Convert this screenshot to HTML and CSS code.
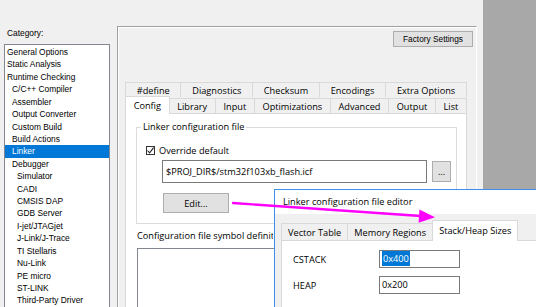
FILE: index.html
```html
<!DOCTYPE html>
<html lang="en">
<head>
    <meta charset="UTF-8">
    <title>Options for node</title>
    <link rel="stylesheet" href="styles.css">
</head>
<body>
    <div class="window">
        <aside class="category">
            <div class="category-label">Category:</div>
            <ul class="category-list">
                <li>General Options</li>
                <li>Static Analysis</li>
                <li>Runtime Checking</li>
                <li class="lvl1">C/C++ Compiler</li>
                <li class="lvl1">Assembler</li>
                <li class="lvl1">Output Converter</li>
                <li class="lvl1">Custom Build</li>
                <li class="lvl1">Build Actions</li>
                <li class="lvl1 selected">Linker</li>
                <li class="lvl1">Debugger</li>
                <li class="lvl2">Simulator</li>
                <li class="lvl2">CADI</li>
                <li class="lvl2">CMSIS DAP</li>
                <li class="lvl2">GDB Server</li>
                <li class="lvl2">I-jet/JTAGjet</li>
                <li class="lvl2">J-Link/J-Trace</li>
                <li class="lvl2">TI Stellaris</li>
                <li class="lvl2">Nu-Link</li>
                <li class="lvl2">PE micro</li>
                <li class="lvl2">ST-LINK</li>
                <li class="lvl2">Third-Party Driver</li>
            </ul>
        </aside>

        <main class="options">
            <div class="options-top">
                <button class="btn factory">Factory Settings</button>
            </div>
            <div class="tabs">
                <div class="tab-row back">
                    <span class="tab">#define</span>
                    <span class="tab">Diagnostics</span>
                    <span class="tab">Checksum</span>
                    <span class="tab">Encodings</span>
                    <span class="tab">Extra Options</span>
                </div>
                <div class="tab-row front">
                    <span class="tab active">Config</span>
                    <span class="tab">Library</span>
                    <span class="tab">Input</span>
                    <span class="tab">Optimizations</span>
                    <span class="tab">Advanced</span>
                    <span class="tab">Output</span>
                    <span class="tab">List</span>
                </div>
            </div>
            <div class="tab-page">
                <fieldset class="group">
                    <legend>Linker configuration file</legend>
                    <label class="check-row">
                        <span class="checkbox">
                            <svg width="9" height="9" viewBox="0 0 9 9"><path d="M1.5 4.5 L3.6 6.8 L7.6 1.6" fill="none" stroke="#222" stroke-width="1.1"/></svg>
                        </span>
                        Override default
                    </label>
                    <div class="path-row">
                        <div class="textbox path">$PROJ_DIR$/stm32f103xb_flash.icf</div>
                        <button class="btn browse">...</button>
                    </div>
                    <button class="btn edit">Edit...</button>
                </fieldset>
                <div class="symbols-label">Configuration file symbol definitions: (one per line)</div>
                <div class="textbox symbols"></div>
            </div>
        </main>

        <div class="backdrop"></div>
    </div>

    <section class="editor">
        <div class="editor-title">Linker configuration file editor</div>
        <div class="editor-tabs">
            <span class="etab">Vector Table</span>
            <span class="etab">Memory Regions</span>
            <span class="etab active">Stack/Heap Sizes</span>
        </div>
        <div class="editor-panel">
            <div class="size-row">
                <span class="size-name">CSTACK</span>
                <div class="textbox size"><span class="sel">0x400</span></div>
            </div>
            <div class="size-row">
                <span class="size-name">HEAP</span>
                <div class="textbox size">0x200</div>
            </div>
        </div>
    </section>

    <svg class="arrow" width="536" height="307" viewBox="0 0 536 307">
        <line x1="233" y1="203" x2="421" y2="216" stroke="#ff00ff" stroke-width="2.4" stroke-linecap="round"/>
        <polygon points="435,217.2 418.6,222.8 419.4,209.6" fill="#ff00ff"/>
    </svg>
</body>
</html>
```

FILE: styles.css
```css
body {
    margin: 0;
    width: 536px;
    height: 307px;
    overflow: hidden;
    position: relative;
    background: #f0f0f0;
    color: #000;
    font-family: "Open Sans", "Noto Sans CJK SC", sans-serif;
    font-size: 9.2px;
}
.window {
    display: flex;
    height: 307px;
}

/* category tree */
.category {
    flex: none;
    display: flex;
    flex-direction: column;
    width: 110px;
    padding-left: 4px;
    box-sizing: border-box;
    font-family: "Liberation Sans", Arial, sans-serif;
    font-size: 8.4px;
}
.category-label {
    height: 44px;
    padding: 28px 0 0 3px;
    box-sizing: border-box;
    line-height: 10px;
}
.category-list {
    flex: 1;
    margin: 0;
    padding: 1px 0 0;
    list-style: none;
    overflow: hidden;
    background: #fff;
    border: 1px solid #828790;
    border-bottom: none;
}
.category-list li {
    height: 12.43px;
    line-height: 12.43px;
    padding-left: 2px;
    white-space: nowrap;
}
.category-list .lvl1 {
    padding-left: 7px;
}
.category-list .lvl2 {
    padding-left: 12px;
}
.category-list .selected {
    background: #0078d7;
    color: #fff;
}

/* options frame */
.options {
    flex: none;
    display: flex;
    flex-direction: column;
    width: 358px;
    margin: 26px 0 0 7px;
    border: 1px solid;
    border-color: #a0a0a0 #fff #fff #a0a0a0;
    border-bottom: none;
    box-shadow: inset 1px 1px 0 #fff;
}
.options-top {
    display: flex;
    justify-content: flex-end;
    padding: 4px 3px 0 0;
}
.btn {
    font: inherit;
    color: #000;
    background: #e1e1e1;
    border: 1px solid #adadad;
    padding: 0;
    margin: 0;
}
.factory {
    width: 80px;
    height: 16px;
    font-family: "Liberation Sans", Arial, sans-serif;
    font-size: 8.3px;
}
.tabs {
    margin: 35px 0 0 7px;
    width: 342px;
}
.tab-row {
    display: flex;
    align-items: flex-end;
}
.tab-row.back {
    height: 15px;
}
.tab-row.front {
    height: 16px;
}
.tab {
    flex: 1 1 auto;
    text-align: center;
    height: 15px;
    line-height: 15px;
    padding: 0 5px;
    border: 1px solid #d9d9d9;
    border-bottom: none;
    margin-left: -1px;
    box-sizing: border-box;
    background: #f0f0f0;
    white-space: nowrap;
}
.tab:first-child {
    margin-left: 0;
}
.tab-row.front .tab.active {
    height: 18px;
    line-height: 17px;
    margin-bottom: -1px;
    background: #fff;
    position: relative;
}
.tab-page {
    flex: 1;
    min-height: 0;
    overflow: hidden;
    margin-left: 7px;
    width: 342px;
    box-sizing: border-box;
    background: #fff;
    border: 1px solid #d9d9d9;
    border-bottom: none;
}
.group {
    margin: 7px 9px 0 10px;
    padding: 0 0 10px 9px;
    border: 1px solid #dcdcdc;
    height: 103px;
    box-sizing: border-box;
}
.group legend {
    padding: 0 2px;
    margin-left: -5px;
    line-height: 12px;
}
.check-row {
    display: flex;
    align-items: center;
    gap: 4px;
    margin-top: 13px;
    height: 9px;
}
.checkbox {
    width: 9px;
    height: 9px;
    box-sizing: border-box;
    border: 1px solid #333;
    background: #fff;
    display: flex;
}
.checkbox svg {
    margin: -1px;
}
.path-row {
    display: flex;
    align-items: center;
    gap: 5px;
    margin: 5px 0 0 16px;
}
.textbox {
    background: #fff;
    border: 1px solid #7a7a7a;
    box-sizing: border-box;
    white-space: nowrap;
}
.path {
    width: 265px;
    height: 23px;
    line-height: 21px;
    padding-left: 3px;
}
.browse {
    width: 19px;
    height: 21px;
}
.edit {
    display: block;
    width: 66px;
    height: 20px;
    margin: 10px 0 0 17px;
}
.symbols-label {
    width: 136px;
    overflow: hidden;
    margin: 6px 0 0 11px;
    line-height: 12px;
    white-space: nowrap;
}
.symbols {
    margin: 6px 0 0 11px;
    width: 320px;
    height: 60px;
    border-color: #828790;
    border-bottom: none;
}
.backdrop {
    flex: 1;
    margin-left: 6px;
    background: #a8a8a8;
}

/* popup editor */
.editor {
    position: absolute;
    left: 274px;
    top: 189px;
    right: 0;
    bottom: 0;
    overflow: hidden;
    background: #f0f0f0;
    border-left: 1px solid #3c91e6;
    border-top: 1px solid #3c91e6;
}
.editor-title {
    height: 24px;
    line-height: 24px;
    padding-left: 8px;
    background: #fff;
    white-space: nowrap;
}
.editor-tabs {
    display: flex;
    align-items: flex-end;
    height: 20px;
    margin: 6px 0 0 6px;
}
.etab {
    height: 17px;
    line-height: 17px;
    padding: 0 6px;
    border: 1px solid #d9d9d9;
    border-bottom: none;
    margin-left: -1px;
    box-sizing: border-box;
    white-space: nowrap;
}
.etab:first-child {
    margin-left: 0;
}
.etab.active {
    height: 21px;
    line-height: 19px;
    margin-bottom: -1px;
    background: #fff;
    position: relative;
}
.editor-panel {
    margin-left: 6px;
    height: 68px;
    background: #fff;
    border-top: 1px solid #d9d9d9;
    border-left: 1px solid #d9d9d9;
    padding: 9px 0 0 11px;
}
.size-row {
    display: flex;
    align-items: center;
    margin-bottom: 8px;
}
.size-name {
    width: 86px;
}
.size {
    width: 81px;
    height: 18px;
    line-height: 16px;
    padding-left: 2px;
}
.sel {
    background: #0078d7;
    color: #fff;
    padding: 1px 1px;
}
.arrow {
    position: absolute;
    left: 0;
    top: 0;
    pointer-events: none;
}
```
